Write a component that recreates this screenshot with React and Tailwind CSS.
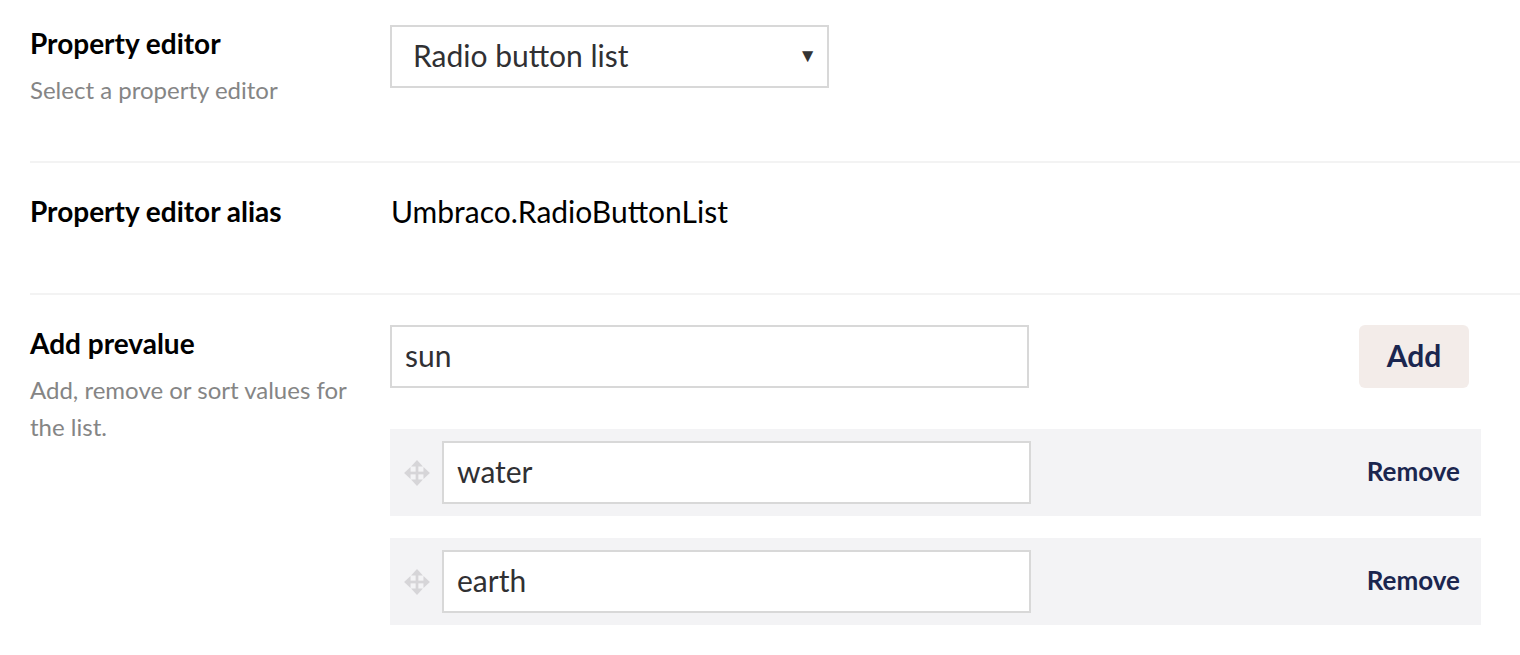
import React from 'react';

const font = { fontFamily: 'Lato, "Open Sans", sans-serif' };

function DragHandle() {
  return (
    <svg width="28" height="28" viewBox="0 0 26 26" className="shrink-0">
      <g fill="#d6d5d8">
        <rect x="11.75" y="5" width="2.5" height="16" />
        <rect x="5" y="11.75" width="16" height="2.5" />
        <polygon points="13,1 7.5,7 18.5,7" />
        <polygon points="13,25 7.5,19 18.5,19" />
        <polygon points="1,13 7,7.5 7,18.5" />
        <polygon points="25,13 19,7.5 19,18.5" />
      </g>
    </svg>
  );
}

function Row({ label, description, children, className }) {
  return (
    <div className={`flex ${className}`}>
      <div className="w-[360px] shrink-0">
        <div className="text-[28px] font-bold leading-[38px] text-[#000]">{label}</div>
        {description && (
          <div className="text-[24px] leading-[37px] text-[#858585] mt-[9px] pr-[10px]">{description}</div>
        )}
      </div>
      <div className="flex-1 min-w-0">{children}</div>
    </div>
  );
}

function PrevalueItem({ value }) {
  return (
    <div className="flex items-center h-[87px] bg-[#f3f3f5] pl-[13px] pr-[21px]">
      <DragHandle />
      <div className="ml-[11px] w-[589px] h-[63px] border-2 border-[#d8d8d8] bg-white flex items-center px-[13px] pb-[2px] text-[30px] text-[#303033]">
        {value}
      </div>
      <button className="ml-auto pb-[2px] text-[26px] font-bold text-[#1b264f]">Remove</button>
    </div>
  );
}

export default function App() {
  return (
    <div className="min-h-screen bg-white pl-[30px] text-[#303033]" style={font}>
      <Row label="Property editor" description="Select a property editor" className="h-[161px] pt-[24px]">
        <div className="mt-[1px] w-[439px] h-[63px] border-2 border-[#d8d8d8] flex items-center pl-[21px] pr-[10px] pb-[2px] text-[30px] text-[#303033]">
          <span>Radio button list</span>
          <span className="ml-auto text-[19px] text-[#333]">▼</span>
        </div>
      </Row>
      <div className="h-[2px] bg-[#f3f3f3]" />
      <Row label="Property editor alias" className="h-[130px] pt-[29px]">
        <div className="text-[30px] leading-[38px] text-[#000] pl-[1px]">Umbraco.RadioButtonList</div>
      </Row>
      <div className="h-[2px] bg-[#f3f3f3]" />
      <Row label="Add prevalue" description="Add, remove or sort values for the list." className="pt-[29px]">
        <div className="w-[1091px] mt-[1px]">
          <div className="flex items-center">
            <div className="w-[639px] h-[63px] border-2 border-[#d8d8d8] flex items-center px-[13px] pb-[2px] text-[30px] text-[#303033]">
              sun
            </div>
            <button className="ml-auto mr-[12px] w-[110px] h-[63px] pb-[2px] rounded-[6px] bg-[#f3ece9] text-[30px] font-bold text-[#1b264f]">
              Add
            </button>
          </div>
          <div className="mt-[41px] flex flex-col gap-[22px]">
            <PrevalueItem value="water" />
            <PrevalueItem value="earth" />
          </div>
        </div>
      </Row>
    </div>
  );
}
